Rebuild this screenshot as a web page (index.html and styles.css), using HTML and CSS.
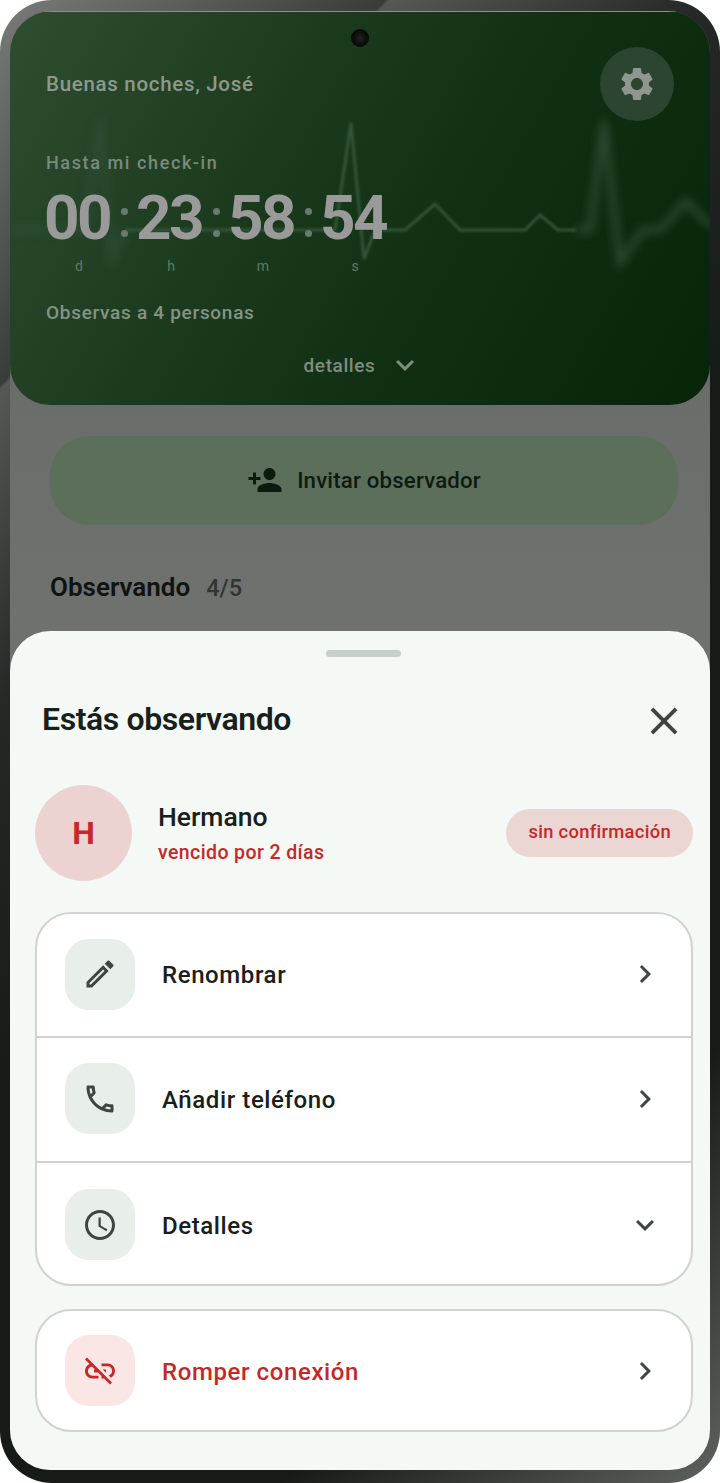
FILE: index.html
```html
<!DOCTYPE html>
<html lang="es">

<head>
  <title>Estás observando</title>
  <link rel="stylesheet" href="styles.css">
</head>

<body>
  <div class="phone">
    <div class="screen">
      <div class="camera"></div>

      <header class="hero">
        <svg class="pulse" viewBox="0 0 700 394" aria-hidden="true">
          <defs>
            <filter id="soft" x="-10%" y="-10%" width="120%" height="120%">
              <feGaussianBlur stdDeviation="5" />
            </filter>
            <filter id="thin" x="-10%" y="-10%" width="120%" height="120%">
              <feGaussianBlur stdDeviation="0.9" />
            </filter>
          </defs>
          <path class="pulse-soft" d="M0 218H75L90 109L102 247L115 218" />
          <path class="pulse-soft" d="M566 218H580L594 109L610 251L633 218H650L676 189L700 214" />
          <path class="pulse-line" d="M115 218H318L325 218L341 111L354 247L365 218H395L425 192L450 218H515L530 203L548 218H566" />
        </svg>

        <div class="hero-top">
          <p class="greeting">Buenas noches, José</p>
          <button class="settings">
            <svg viewBox="0 0 24 24"><path d="M19.14 12.94c.04-.3.06-.61.06-.94 0-.32-.02-.64-.07-.94l2.03-1.58c.18-.14.23-.41.12-.61l-1.92-3.32c-.12-.22-.37-.29-.59-.22l-2.39.96c-.5-.38-1.03-.7-1.62-.94l-.36-2.54c-.04-.24-.24-.41-.48-.41h-3.84c-.24 0-.43.17-.47.41l-.36 2.54c-.59.24-1.13.57-1.62.94l-2.39-.96c-.22-.08-.47 0-.59.22L2.74 8.87c-.12.21-.08.47.12.61l2.03 1.58c-.05.3-.09.63-.09.94s.02.64.07.94l-2.03 1.58c-.18.14-.23.41-.12.61l1.92 3.32c.12.22.37.29.59.22l2.39-.96c.5.38 1.03.7 1.62.94l.36 2.54c.05.24.24.41.48.41h3.84c.24 0 .44-.17.47-.41l.36-2.54c.59-.24 1.13-.56 1.62-.94l2.39.96c.22.08.47 0 .59-.22l1.92-3.32c.12-.22.07-.47-.12-.61l-2.01-1.58zM12 15.6c-1.98 0-3.6-1.62-3.6-3.6s1.62-3.6 3.6-3.6 3.6 1.62 3.6 3.6-1.62 3.6-3.6 3.6z" /></svg>
          </button>
        </div>

        <p class="countdown-label">Hasta mi check-in</p>
        <div class="countdown">
          <div class="unit"><span class="digits">00</span><span class="unit-name">d</span></div>
          <div class="unit"><span class="digits">23</span><span class="unit-name">h</span></div>
          <div class="unit"><span class="digits">58</span><span class="unit-name">m</span></div>
          <div class="unit"><span class="digits">54</span><span class="unit-name">s</span></div>
        </div>

        <p class="watching">Observas a 4 personas</p>
        <div class="more">
          <span>detalles</span>
          <svg viewBox="0 0 24 24"><path d="M16.59 8.59L12 13.17 7.41 8.59 6 10l6 6 6-6z" /></svg>
        </div>
      </header>

      <button class="invite">
        <svg viewBox="0 0 24 24"><path d="M15 12c2.21 0 4-1.79 4-4s-1.79-4-4-4-4 1.79-4 4 1.79 4 4 4zm-9-2V7H4v3H1v2h3v3h2v-3h3v-2H6zm9 4c-2.67 0-8 1.34-8 4v2h16v-2c0-2.66-5.33-4-8-4z" /></svg>
        Invitar observador
      </button>

      <div class="section-title">
        <h2>Observando</h2>
        <span>4/5</span>
      </div>

      <section class="sheet">
        <div class="handle"></div>

        <div class="sheet-head">
          <h1>Estás observando</h1>
          <svg class="close" viewBox="0 0 24 24"><path d="M19 6.41L17.59 5 12 10.59 6.41 5 5 6.41 10.59 12 5 17.59 6.41 19 12 13.41 17.59 19 19 17.59 13.41 12z" /></svg>
        </div>

        <div class="person">
          <div class="avatar">H</div>
          <div class="person-info">
            <div class="person-name">Hermano</div>
            <div class="person-status">vencido por 2 días</div>
          </div>
          <div class="chip">sin confirmación</div>
        </div>

        <div class="card">
          <div class="row">
            <div class="tile">
              <svg viewBox="0 0 24 24"><path d="M14.06 9.02l.92.92L5.92 19H5v-.92l9.06-9.06M17.66 3c-.25 0-.51.1-.7.29l-1.83 1.83 3.75 3.75 1.83-1.83c.39-.39.39-1.02 0-1.41l-2.34-2.34c-.2-.2-.45-.29-.71-.29zm-3.6 3.19L3 17.25V21h3.75L17.81 9.94l-3.75-3.75z" /></svg>
            </div>
            <span class="row-label">Renombrar</span>
            <svg class="arrow" viewBox="0 0 24 24"><path d="M10 6L8.59 7.41 13.17 12l-4.58 4.59L10 18l6-6z" /></svg>
          </div>
          <div class="row">
            <div class="tile">
              <svg viewBox="0 0 24 24"><path d="M6.54 5c.06.89.21 1.76.45 2.59l-1.2 1.2c-.41-1.2-.67-2.47-.76-3.79h1.51m9.86 12.02c.85.24 1.72.39 2.6.45v1.49c-1.32-.09-2.59-.35-3.8-.75l1.2-1.19M7.5 3H4c-.55 0-1 .45-1 1 0 9.39 7.61 17 17 17 .55 0 1-.45 1-1v-3.49c0-.55-.45-1-1-1-1.24 0-2.45-.2-3.57-.57-.1-.04-.21-.05-.31-.05-.26 0-.51.1-.71.29l-2.2 2.2c-2.83-1.45-5.15-3.76-6.59-6.59l2.2-2.2c.28-.28.36-.67.25-1.02C8.7 6.45 8.5 5.25 8.5 4c0-.55-.45-1-1-1z" /></svg>
            </div>
            <span class="row-label">Añadir teléfono</span>
            <svg class="arrow" viewBox="0 0 24 24"><path d="M10 6L8.59 7.41 13.17 12l-4.58 4.59L10 18l6-6z" /></svg>
          </div>
          <div class="row">
            <div class="tile">
              <svg viewBox="0 0 24 24"><path d="M11.99 2C6.47 2 2 6.48 2 12s4.47 10 9.99 10C17.52 22 22 17.52 22 12S17.52 2 11.99 2zM12 20c-4.42 0-8-3.58-8-8s3.58-8 8-8 8 3.58 8 8-3.58 8-8 8zm.5-13H11v6l5.25 3.15.75-1.23-4.5-2.67z" /></svg>
            </div>
            <span class="row-label">Detalles</span>
            <svg class="arrow" viewBox="0 0 24 24"><path d="M16.59 8.59L12 13.17 7.41 8.59 6 10l6 6 6-6z" /></svg>
          </div>
        </div>

        <div class="card card-danger">
          <div class="row">
            <div class="tile">
              <svg viewBox="0 0 24 24"><path d="M17 7h-4v1.9h4c1.71 0 3.1 1.39 3.1 3.1 0 1.43-.98 2.63-2.31 2.98l1.46 1.46C20.88 15.61 22 13.95 22 12c0-2.76-2.24-5-5-5zm-1 4h-2.19l2 2H16zM2 4.27l3.11 3.11C3.29 8.12 2 9.91 2 12c0 2.76 2.24 5 5 5h4v-1.9H7c-1.71 0-3.1-1.39-3.1-3.1 0-1.59 1.21-2.9 2.76-3.07L8.73 11H8v2h2.73L13 15.27V17h1.73l4.01 4L20 19.74 3.27 3 2 4.27z" /></svg>
            </div>
            <span class="row-label">Romper conexión</span>
            <svg class="arrow" viewBox="0 0 24 24"><path d="M10 6L8.59 7.41 13.17 12l-4.58 4.59L10 18l6-6z" /></svg>
          </div>
        </div>
      </section>
    </div>
  </div>
</body>

</html>
```

FILE: styles.css
```css
* {
  box-sizing: border-box;
}

html,
body {
  margin: 0;
  background-color: #fff;
}

body {
  font-family: Roboto, "Liberation Sans", sans-serif;
}

p,
h1,
h2 {
  margin: 0;
}

button {
  border: none;
  padding: 0;
  font-family: inherit;
}

svg {
  display: block;
  fill: currentColor;
}

/* device frame */
.phone {
  width: 720px;
  height: 1483px;
  padding: 11px 10px 13px;
  border-radius: 52px;
  background: linear-gradient(135deg, #7a7c7a 0%, #3a3c3a 17.5%, #555855 17.7%, #252826 32%, #171b18 50%, #171b18 80%, #5d625e 100%);
}

.screen {
  position: relative;
  height: 1459px;
  overflow: hidden;
  border-radius: 42px 42px 40px 40px;
  background: linear-gradient(180deg, #5f665f 0%, #6f716f 40%);
}

.camera {
  position: absolute;
  top: 18px;
  left: 341px;
  z-index: 2;
  width: 18px;
  height: 18px;
  border-radius: 50%;
  background: radial-gradient(circle at 50% 50%, #1e2420 0%, #050705 70%);
}

/* top green card */
.hero {
  position: relative;
  height: 394px;
  padding: 35px 36px 0;
  border-radius: 0 0 40px 40px;
  border-top: 1px solid #8b908b;
  background: linear-gradient(120deg, #2e4d31 0%, #1b3a1d 38%, #113013 62%, #082409 100%);
}

.pulse {
  position: absolute;
  top: 0;
  left: 0;
  width: 700px;
  height: 394px;
  fill: none;
}

.pulse-line,
.pulse-soft {
  fill: none;
}

.pulse-line {
  stroke: #33533a;
  stroke-width: 3;
  filter: url(#thin);
}

.pulse-soft {
  stroke: #2e4c35;
  stroke-width: 6;
  filter: url(#soft);
}

.hero-top {
  position: relative;
  display: flex;
  justify-content: space-between;
  align-items: center;
}

.greeting {
  font-size: 20.5px;
  font-weight: 500;
  letter-spacing: 0.7px;
  color: #8c9a8d;
}

.settings {
  display: flex;
  align-items: center;
  justify-content: center;
  width: 74px;
  height: 74px;
  border-radius: 50%;
  background-color: #2b4530;
  color: #8e968f;
}

.settings svg {
  width: 40px;
  height: 40px;
}

.countdown-label {
  position: relative;
  margin-top: 31px;
  font-size: 18px;
  font-weight: 500;
  letter-spacing: 1.6px;
  color: #7a8a7b;
}

.countdown {
  position: relative;
  display: flex;
  margin-top: 8px;
}

.unit {
  position: relative;
  display: flex;
  flex-direction: column;
  align-items: center;
  width: 66px;
  margin-right: 26px;
}

.unit + .unit::before {
  content: "";
  position: absolute;
  top: 27px;
  left: -17px;
  width: 7px;
  height: 7px;
  border-radius: 50%;
  background-color: #6a7a6c;
  box-shadow: 0 22px 0 #6a7a6c;
}

.digits {
  margin-right: 4px;
  font-size: 62px;
  line-height: 74px;
  font-weight: 700;
  letter-spacing: -2.5px;
  color: #9a9a9a;
  white-space: nowrap;
}

.unit-name {
  margin-top: 3px;
  font-size: 14px;
  line-height: 16px;
  color: #5f7b61;
}

.watching {
  position: relative;
  margin-top: 27px;
  font-size: 19px;
  font-weight: 500;
  letter-spacing: 0.7px;
  color: #849485;
}

.more {
  position: relative;
  display: flex;
  align-items: center;
  justify-content: center;
  gap: 12px;
  margin-top: 23px;
  padding-left: 7px;
  font-size: 19px;
  font-weight: 500;
  letter-spacing: 0.6px;
  color: #7f8d80;
}

.more svg {
  width: 36px;
  height: 36px;
}

/* dimmed page behind the sheet */
.invite {
  display: flex;
  align-items: center;
  justify-content: center;
  gap: 14px;
  width: 628px;
  height: 89px;
  margin: 31px 0 0 40px;
  padding-bottom: 2px;
  border-radius: 40px;
  background-color: #5b6f5b;
  color: #0e1a10;
  font-size: 22.2px;
  font-weight: 500;
  letter-spacing: 0.2px;
}

.invite svg {
  width: 36px;
  height: 36px;
}

.section-title {
  display: flex;
  align-items: baseline;
  gap: 16px;
  margin: 47px 0 0 40px;
}

.section-title h2 {
  font-size: 26px;
  font-weight: 600;
  color: #0f1311;
}

.section-title span {
  font-size: 23.5px;
  font-weight: 500;
  color: #303532;
}

/* bottom sheet */
.sheet {
  position: absolute;
  top: 620px;
  left: 0;
  right: 0;
  bottom: 0;
  padding: 19px 17px 0 25px;
  border-radius: 40px 40px 0 0;
  background-color: #f4f9f6;
}

.handle {
  width: 75px;
  height: 7px;
  margin-left: 291px;
  border-radius: 4px;
  background-color: #c8d0cb;
}

.sheet-head {
  display: flex;
  justify-content: space-between;
  align-items: center;
  margin: 37px 0 0 7px;
}

.sheet-head h1 {
  font-size: 32px;
  line-height: 46px;
  font-weight: 600;
  letter-spacing: -0.4px;
  color: #17201b;
}

.close {
  flex: none;
  width: 46px;
  height: 46px;
  margin: 4px 6px 0 0;
  color: #3f4541;
}

.person {
  display: flex;
  align-items: center;
  margin-top: 41px;
}

.avatar {
  display: flex;
  align-items: center;
  justify-content: center;
  flex: none;
  width: 97px;
  height: 96px;
  border-radius: 50%;
  background-color: #ecd3d1;
  color: #c62828;
  font-size: 32px;
  font-weight: 700;
}

.person-info {
  flex: 1;
  margin-left: 26px;
}

.person-name {
  font-size: 26.5px;
  line-height: 32px;
  font-weight: 500;
  color: #17201b;
}

.person-status {
  margin-top: 8px;
  font-size: 19.5px;
  line-height: 24px;
  font-weight: 500;
  letter-spacing: 0.4px;
  color: #c62828;
}

.chip {
  padding: 0 22px;
  height: 48px;
  line-height: 46px;
  border-radius: 24px;
  background-color: #ecd6d3;
  color: #c62828;
  font-size: 18.4px;
  font-weight: 500;
  letter-spacing: 0.3px;
}

.card {
  margin-top: 31px;
  overflow: hidden;
  border: 2px solid #cfd4d0;
  border-radius: 36px;
  background-color: #fff;
}

.row {
  display: flex;
  align-items: center;
  height: 122px;
  padding: 0 28px 2px 28px;
}

.row + .row {
  height: 125px;
  border-top: 2px solid #cfd4d0;
}

.row:nth-child(3) {
  height: 123px;
  padding: 2px 28px 0 28px;
}

.tile {
  display: flex;
  align-items: center;
  justify-content: center;
  flex: none;
  width: 70px;
  height: 71px;
  border-radius: 24px;
  background-color: #e8eee9;
  color: #3f4541;
}

.tile svg {
  width: 36px;
  height: 36px;
}

.row-label {
  flex: 1;
  margin-left: 27px;
  padding-top: 2px;
  font-size: 24px;
  font-weight: 500;
  letter-spacing: 0.6px;
  color: #17201b;
}

.arrow {
  flex: none;
  width: 36px;
  height: 36px;
  color: #3f4541;
}

.card-danger {
  margin-top: 23px;
}

.card-danger .row {
  height: 119px;
  padding-bottom: 0;
}

.card-danger .tile {
  background-color: #f9e6e5;
  color: #c62828;
}

.card-danger .row-label {
  color: #c62828;
}
```
